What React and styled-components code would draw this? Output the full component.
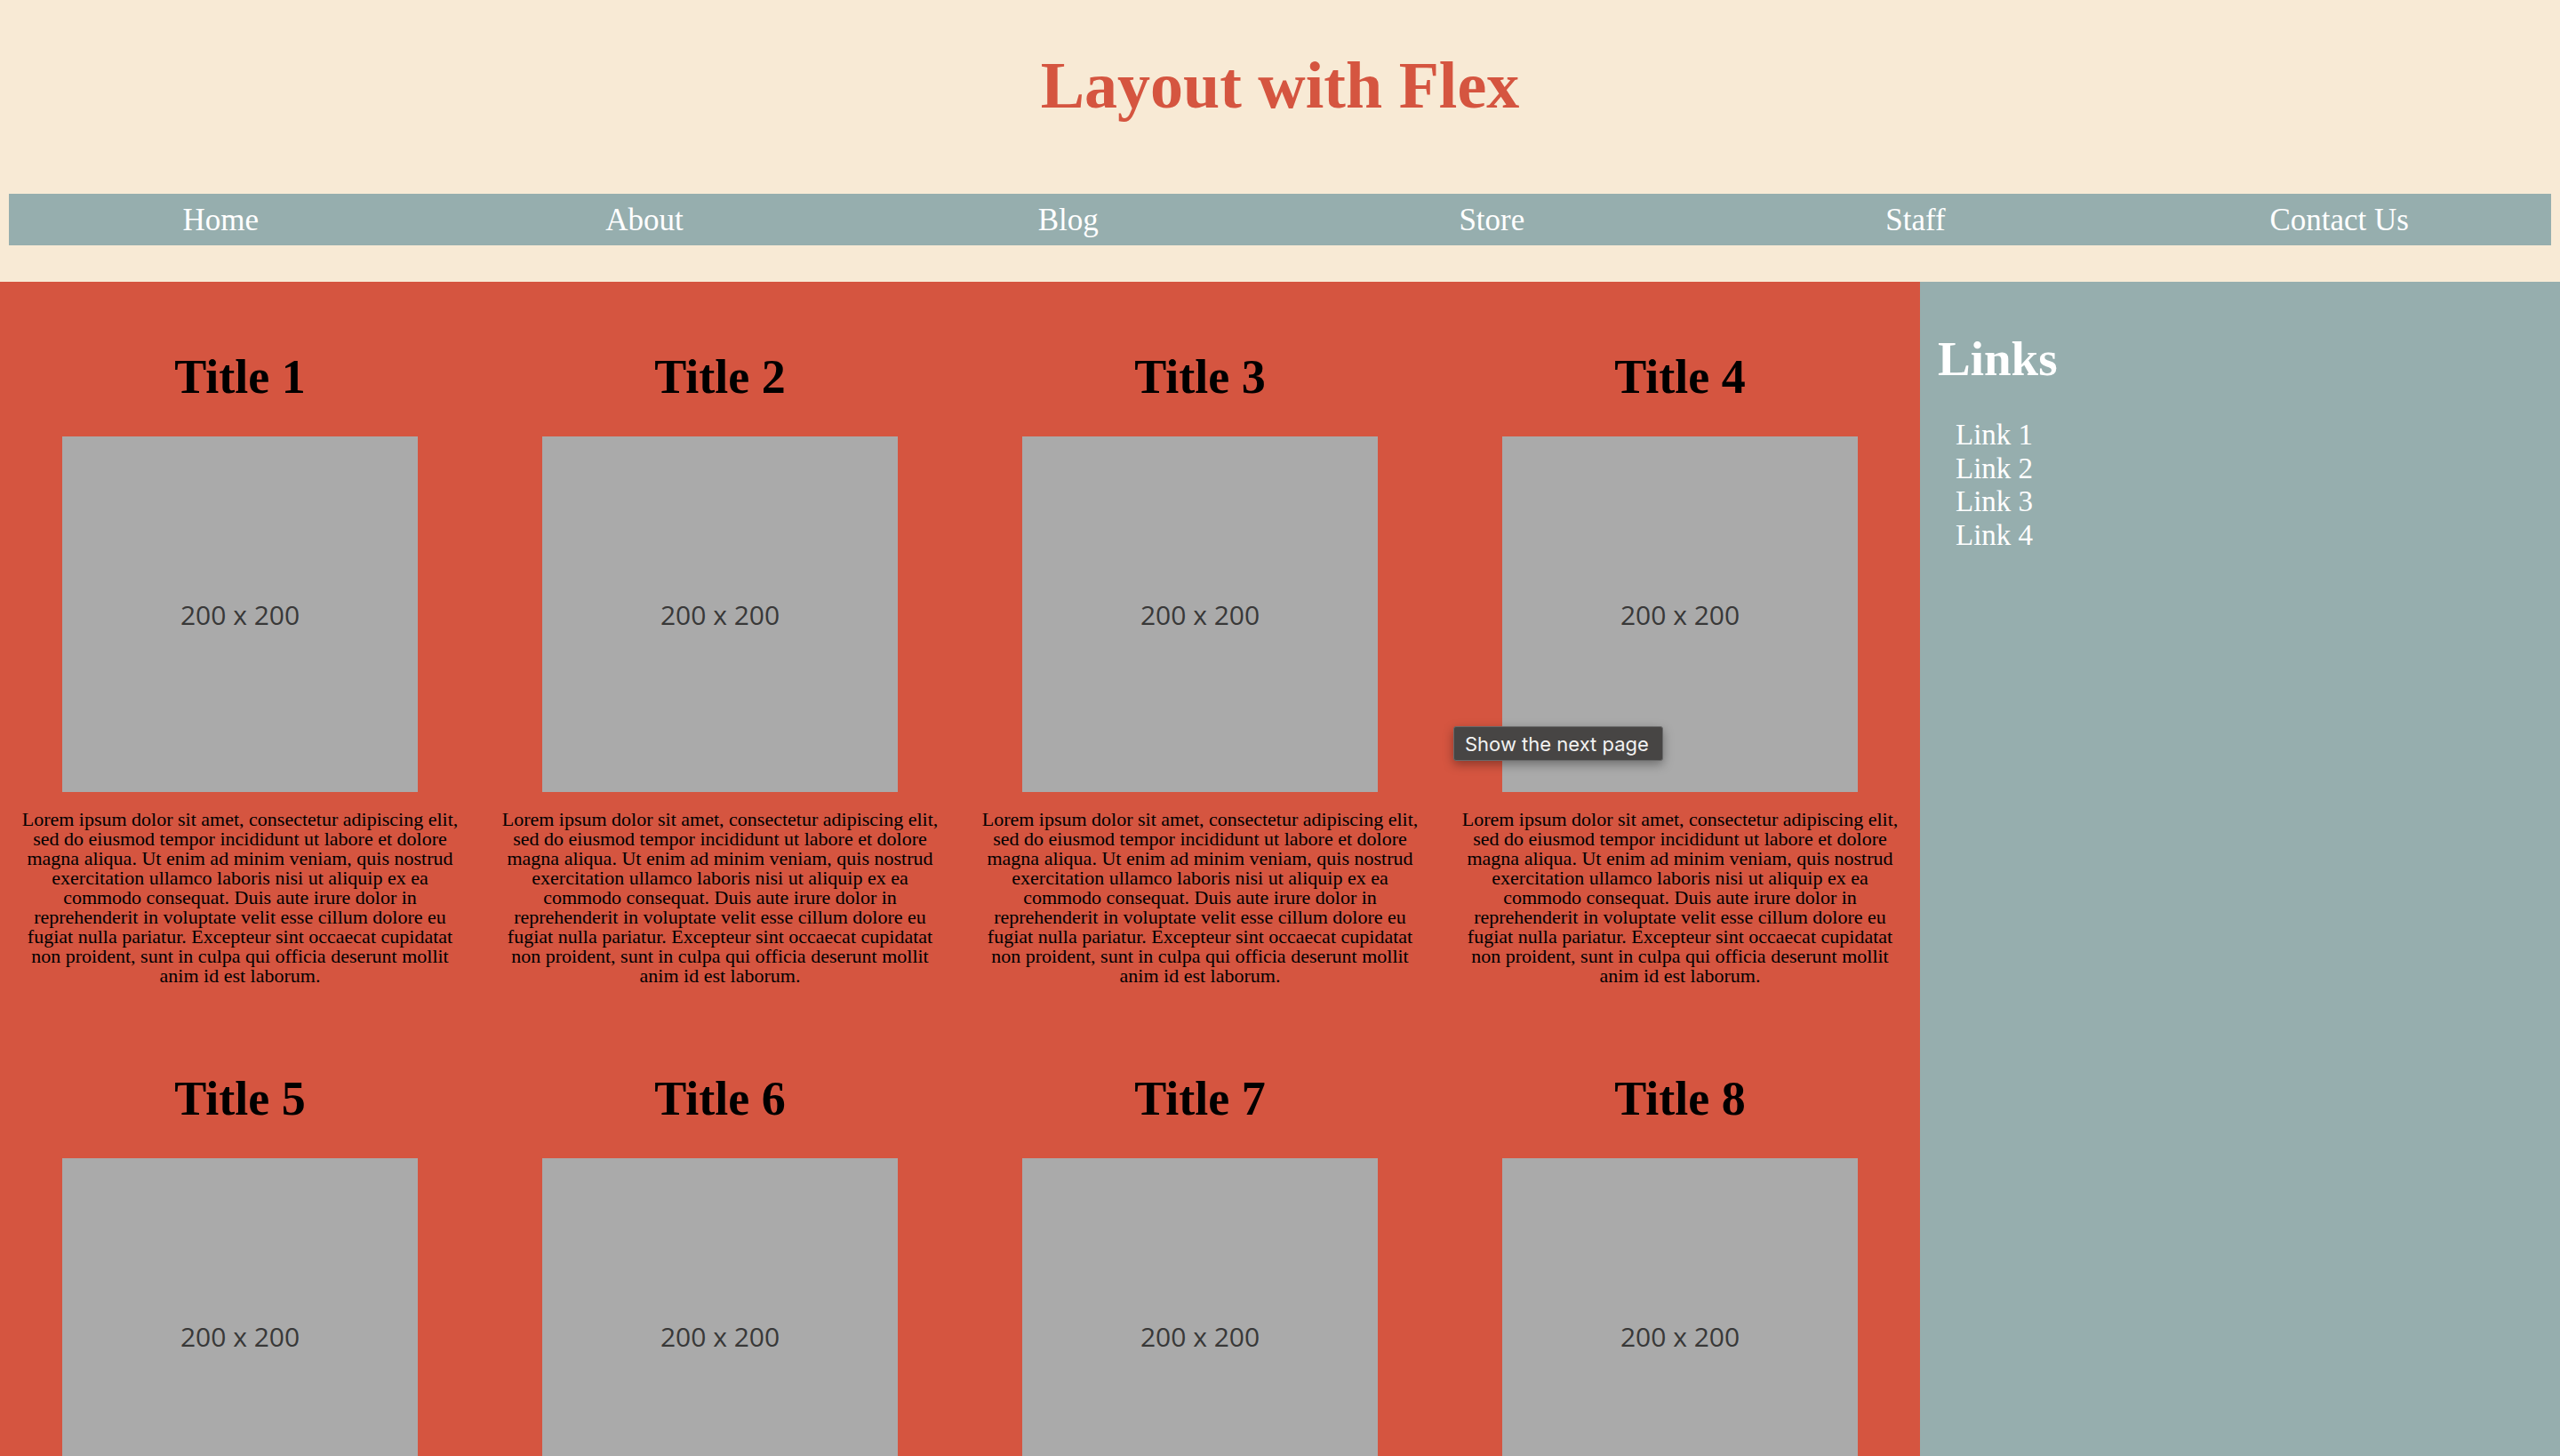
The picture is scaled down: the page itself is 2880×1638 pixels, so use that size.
import React from 'react';
import styled, { createGlobalStyle } from 'styled-components';

const lorem =
    'Lorem ipsum dolor sit amet, consectetur adipiscing elit, sed do eiusmod tempor incididunt ut labore et dolore magna aliqua. Ut enim ad minim veniam, quis nostrud exercitation ullamco laboris nisi ut aliquip ex ea commodo consequat. Duis aute irure dolor in reprehenderit in voluptate velit esse cillum dolore eu fugiat nulla pariatur. Excepteur sint occaecat cupidatat non proident, sunt in culpa qui officia deserunt mollit anim id est laborum.';

const navItems = ['Home', 'About', 'Blog', 'Store', 'Staff', 'Contact Us'];
const cards = [1, 2, 3, 4, 5, 6, 7, 8];
const links = ['Link 1', 'Link 2', 'Link 3', 'Link 4'];

const App = () => {
    return (
        <Page>
            <GlobalStyle />
            <Header>
                <SiteTitle>Layout with Flex</SiteTitle>
                <Nav>
                    {navItems.map(item => (
                        <NavItem key={item}>{item}</NavItem>
                    ))}
                </Nav>
            </Header>
            <Main>
                <Content>
                    {cards.map(n => (
                        <Card key={n}>
                            <CardTitle>Title {n}</CardTitle>
                            <Placeholder>200 x 200</Placeholder>
                            <CardText>{lorem}</CardText>
                        </Card>
                    ))}
                </Content>
                <Sidebar>
                    <SidebarTitle>Links</SidebarTitle>
                    <LinkList>
                        {links.map(link => (
                            <LinkItem key={link}>{link}</LinkItem>
                        ))}
                    </LinkList>
                </Sidebar>
            </Main>
            <Tooltip>Show the next page</Tooltip>
        </Page>
    );
};

const GlobalStyle = createGlobalStyle`
  html, body {
    margin: 0;
    padding: 0;
    background-color: #f8ead5;
  }

  body {
    font-family: "Liberation Serif", "Times New Roman", serif;
  }
`;

const Page = styled.div`
  position: relative;
  min-height: 100vh;
`;

const Header = styled.header`
  padding: 60px 10px 41px;
`;

const SiteTitle = styled.h1`
  margin: 0 0 86px;
  font-size: 74px;
  line-height: 72px;
  font-weight: 700;
  text-align: center;
  color: #d55540;
`;

const Nav = styled.nav`
  display: flex;
  align-items: center;
  height: 58px;
  background-color: #96aeae;
`;

const NavItem = styled.a`
  flex: 1;
  text-align: center;
  font-size: 35px;
  line-height: 1;
  color: #fff;
  cursor: pointer;
`;

const Main = styled.main`
  display: flex;
  align-items: stretch;
`;

const Content = styled.section`
  width: 75%;
  display: grid;
  grid-template-columns: repeat(4, 1fr);
  row-gap: 40px;
  padding: 40px 0 40px;
  background-color: #d55540;
`;

const Card = styled.article`
  display: flex;
  flex-direction: column;
  align-items: center;
  padding: 0 22px;
`;

const CardTitle = styled.h2`
  margin: 40px 0;
  font-size: 54px;
  line-height: 54px;
  font-weight: 700;
  color: #000;
`;

const Placeholder = styled.div`
  display: flex;
  align-items: center;
  justify-content: center;
  width: 400px;
  height: 400px;
  background-color: #aaaaaa;
  font-family: "Open Sans", "Liberation Sans", sans-serif;
  font-size: 30px;
  color: #383838;
`;

const CardText = styled.p`
  margin: 20px 0 20px;
  font-size: 22px;
  line-height: 22px;
  text-align: center;
  color: #000;
`;

const Sidebar = styled.aside`
  width: 25%;
  padding: 20px 20px;
  box-sizing: border-box;
  background-color: #96aeae;
  color: #fff;
`;

const SidebarTitle = styled.h2`
  margin: 40px 0;
  font-size: 55px;
  line-height: 54px;
  font-weight: 700;
`;

const LinkList = styled.ul`
  list-style: none;
  margin: 0;
  padding: 0 0 0 20px;
`;

const LinkItem = styled.li`
  font-size: 33px;
  line-height: 37.6px;
  cursor: pointer;
`;

const Tooltip = styled.div`
  position: absolute;
  left: 1635px;
  top: 817px;
  width: 236px;
  height: 39px;
  box-sizing: border-box;
  display: flex;
  align-items: center;
  padding: 0 12px;
  background-color: #474544;
  border: 1px solid #6a6a6a;
  border-radius: 3px;
  box-shadow: 0 4px 12px rgba(0, 0, 0, 0.35);
  font-family: "Inter", "Roboto", sans-serif;
  font-size: 22px;
  color: #f2f2f2;
  white-space: nowrap;
`;

export default App;
